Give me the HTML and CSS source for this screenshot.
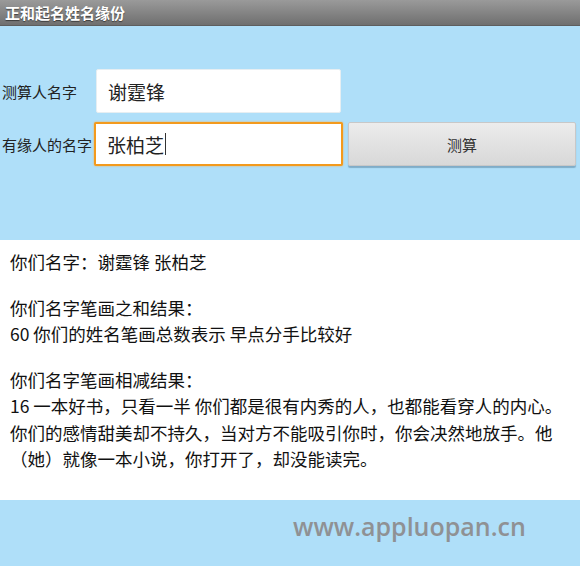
FILE: index.html
```html
<!DOCTYPE html>
<html lang="zh-CN">
<head>
    <meta charset="UTF-8">
    <meta name="viewport" content="width=device-width, initial-scale=1.0">
    <title>正和起名姓名缘份</title>
    <link rel="stylesheet" href="styles.css">
</head>
<body>

    <!-- Title bar -->
    <div class="titlebar">正和起名姓名缘份</div>

    <!-- Input form -->
    <div class="form">
        <div class="row">
            <label class="label first">测算人名字</label>
            <input class="field first" type="text" value="谢霆锋">
        </div>
        <div class="row">
            <label class="label">有缘人的名字</label>
            <div class="field focused">张柏芝<span class="caret"></span></div>
            <button class="calc">测算</button>
        </div>
    </div>

    <!-- Result -->
    <div class="result">
        <p>你们名字：谢霆锋 张柏芝</p>
        <p>你们名字笔画之和结果：<br>60 你们的姓名笔画总数表示 早点分手比较好</p>
        <p>你们名字笔画相减结果：<br>16 一本好书，只看一半 你们都是很有内秀的人，也都能看穿人的内心。你们的感情甜美却不持久，当对方不能吸引你时，你会决然地放手。他（她）就像一本小说，你打开了，却没能读完。</p>
    </div>

    <div class="footer">
        <span class="mark">www.appluopan.cn</span>
    </div>

</body>
</html>
```

FILE: styles.css
```css
/* Basic styles */
body {
    margin: 0;
    padding: 0;
    font-family: "Noto Sans CJK SC", "Noto Sans", sans-serif;
    background-color: #afdff9;
    color: #111;
}

/* Title bar */
.titlebar {
    height: 26px;
    line-height: 26px;
    padding-left: 5px;
    font-size: 15px;
    font-weight: bold;
    color: #fff;
    text-shadow: 0 1px 1px rgba(0, 0, 0, 0.5);
    background: linear-gradient(#9a9a9a, #6f6f6f);
    border-bottom: 1px solid #5e5e5e;
    box-sizing: border-box;
}

/* Form */
.form {
    height: 214px;
    padding-top: 43px;
    box-sizing: border-box;
}

.row {
    display: flex;
    align-items: center;
    margin-bottom: 9px;
}

.label {
    width: 94px;
    padding-left: 2px;
    box-sizing: border-box;
    font-size: 15px;
    color: #222;
}

.label.first {
    width: 96px;
}

.field {
    box-sizing: border-box;
    height: 44px;
    background: #fff;
    border: 1px solid #e6eef2;
    border-radius: 2px;
    padding-left: 11px;
    font-family: inherit;
    font-size: 19px;
    color: #222;
    outline: none;
}

.field.first {
    width: 245px;
}

.field.focused {
    width: 249px;
    display: flex;
    align-items: center;
    padding-left: 11px;
    border: 2px solid #f39a1d;
    box-shadow: 0 0 2px #f7b04a;
}

.caret {
    width: 1px;
    height: 22px;
    background: #333;
    margin-left: 1px;
}

.calc {
    margin-left: 5px;
    width: 228px;
    height: 44px;
    font-family: inherit;
    font-size: 15px;
    color: #333;
    background: linear-gradient(#ececec, #d8d8d8);
    border: 1px solid #c8c8c8;
    border-radius: 2px;
    box-shadow: 0 2px 1px rgba(70, 110, 140, 0.45);
}

/* Result panel */
.result {
    background: #fff;
    height: 260px;
    padding: 9px 10px 0 10px;
    box-sizing: border-box;
    font-size: 17.5px;
    line-height: 26.5px;
}

.result p {
    margin: 0 0 19px 0;
}

/* Watermark */
.footer {
    height: 66px;
    padding-left: 293px;
    padding-top: 9px;
    box-sizing: border-box;
}

.mark {
    font-family: "Open Sans", sans-serif;
    font-size: 25px;
    font-weight: 600;
    color: #8f9194;
}
```
